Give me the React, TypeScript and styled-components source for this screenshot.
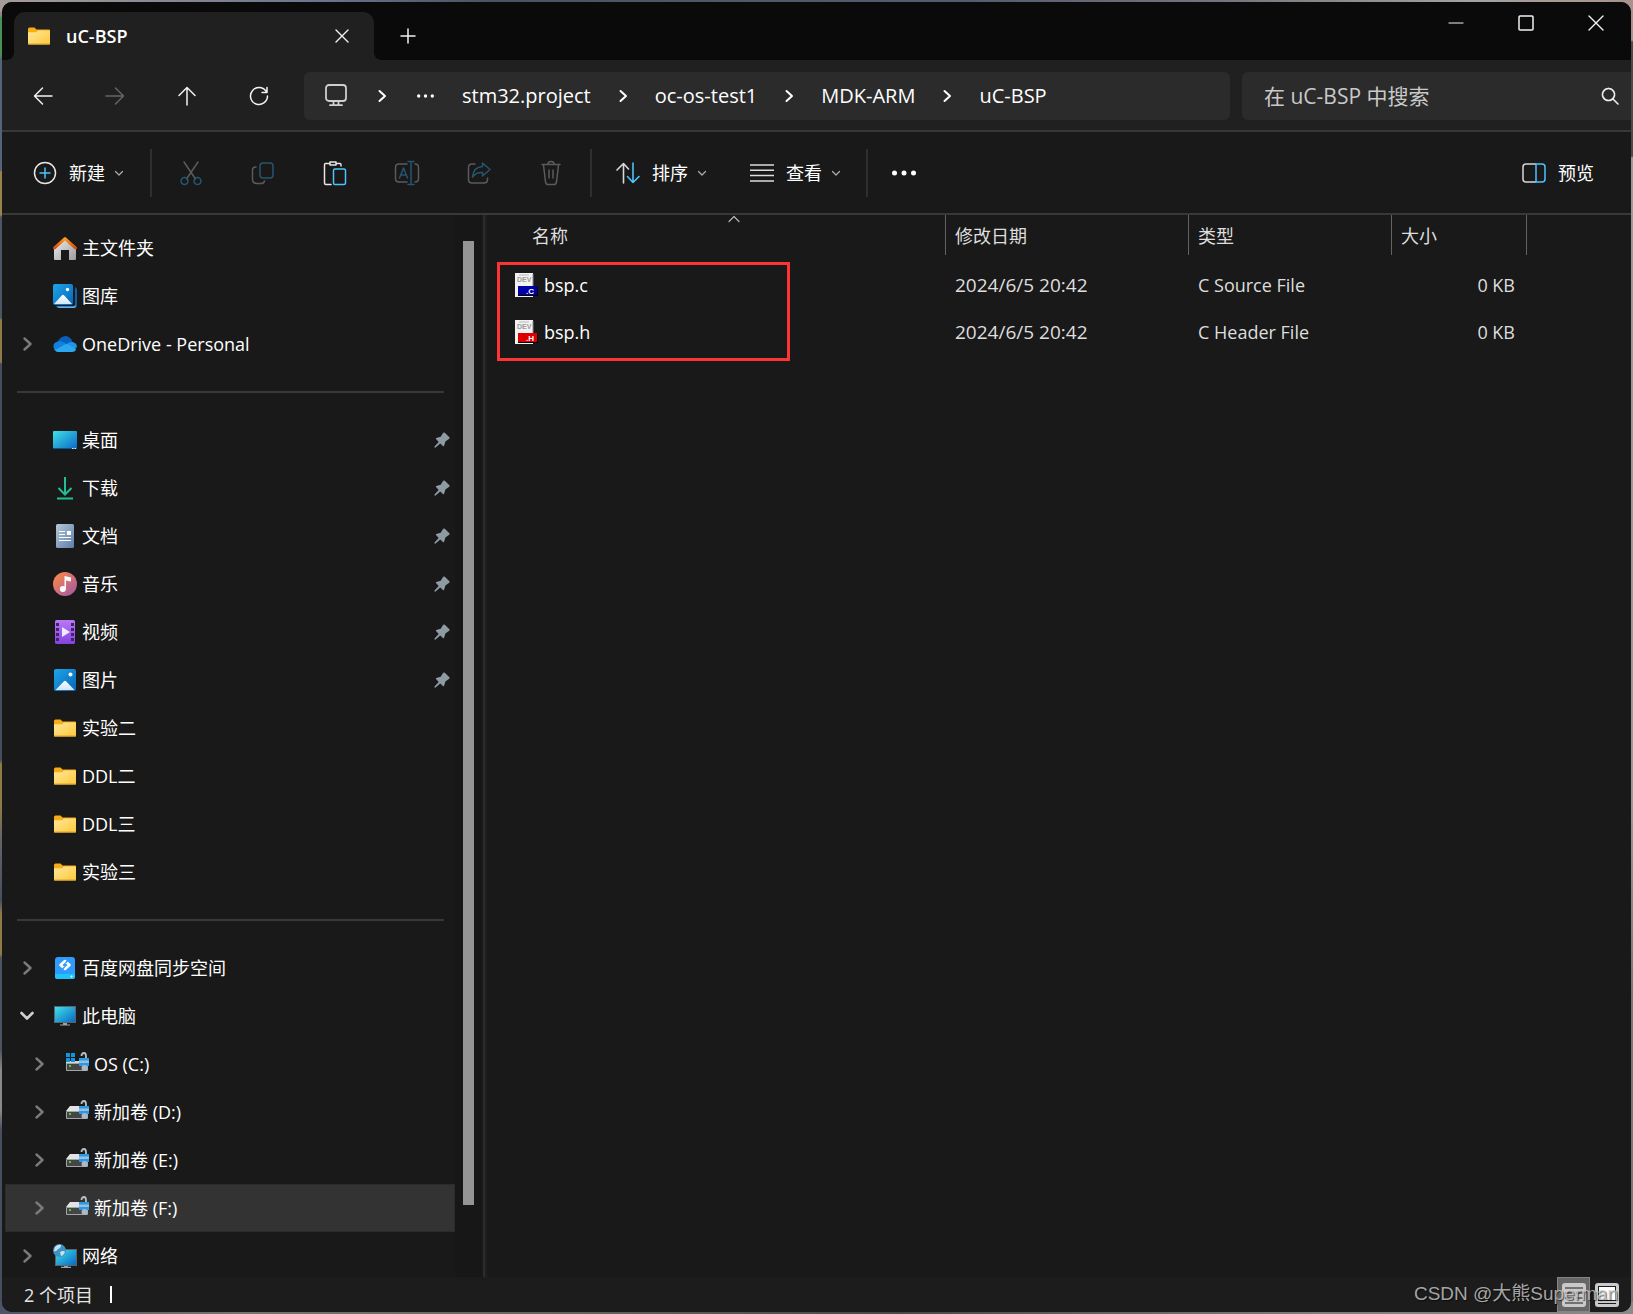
import React from "react";
import styled, { createGlobalStyle, css } from "styled-components";

const ui = `"Open Sans", "Noto Sans CJK SC", sans-serif`;

const GlobalStyle = createGlobalStyle`
  * { box-sizing: border-box; }
  html, body { margin: 0; height: 100%; }
  #root { height: 100%; }
  body {
    overflow: hidden;
    font-family: ${ui};
    font-size: 18px;
    line-height: 24px;
    color: #fff;
  }
  button { font: inherit; color: inherit; background: none; border: 0; padding: 0; }
  svg { display: block; flex: none; }
`;

const Desktop = styled.div`
  height: 100vh;
  min-height: 600px;
  padding: 2px;
  background:
    linear-gradient(90deg, #a59c99, #6a748c 20%, #4d5263 30%, #565d70 60%, #77747d 75%, #a3a3a0 90%, #a8928d) top / 100% 12px no-repeat,
    linear-gradient(90deg, #4d5468, #77746f 15%, #66625e 35%, #484848 55%, #7b7b7b 80%, #8a8a8a) bottom / 100% 12px no-repeat,
    linear-gradient(180deg, #8f8786 0 16px, #4b9155 17px 54px, #56617a 60px 170px, #9a824b 172px 215px, #4e5566 217px 318px, #8d7a48 320px 362px, #464c5c 364px 760px, #8c7a49 764px 806px, #61646a 840px, #494e5e 900px, #8d7a48 914px 954px, #4e5361 958px 1050px, #8c8a86 1070px 1110px, #484e60 1130px) left / 50% 100% no-repeat,
    linear-gradient(180deg, #a8928d 0 40px, #4b4b4b 42px 156px, #9a9a9a 158px 800px, #777 1000px) right / 50% 100% no-repeat;
`;

const Window = styled.div`
  position: relative;
  height: 100%;
  display: flex;
  flex-direction: column;
  border-radius: 10px;
  overflow: hidden;
  background: #191919;
`;

const TabStrip = styled.header`
  flex: none;
  height: 58px;
  display: flex;
  padding-left: 12px;
  background: #0a0a0a;
`;

const Tab = styled.div`
  position: relative;
  align-self: flex-end;
  width: 360px;
  height: 48px;
  display: flex;
  align-items: center;
  gap: 15px;
  padding: 0 16px 0 13px;
  border-radius: 11px 11px 0 0;
  background: #202020;
  font-weight: 600;
  &::before, &::after {
    content: "";
    position: absolute;
    bottom: 0;
    width: 6px;
    height: 6px;
  }
  &::before { left: -6px; background: radial-gradient(circle at 0 0, #0a0a0a 5px, #202020 6px); }
  &::after { right: -6px; background: radial-gradient(circle at 100% 0, #0a0a0a 5px, #202020 6px); }
`;

const TabTitle = styled.span`flex: 1;`;

const IconButton = styled.button<{ $w: number; $h: number }>`
  width: ${(p) => p.$w}px;
  height: ${(p) => p.$h}px;
  display: flex;
  flex: none;
  align-items: center;
  justify-content: center;
  color: #f2f2f2;
  &:disabled { color: #666; }
`;

const NewTab = styled(IconButton)`
  align-self: flex-end;
  margin-left: 10px;
`;

const Caption = styled.div`
  display: flex;
  margin-left: auto;
`;

const NavBar = styled.div`
  flex: none;
  height: 72px;
  display: flex;
  align-items: center;
  padding: 2px 0 0 5px;
  border-bottom: 2px solid #383838;
  background: #202020;
`;

const AddressBar = styled.nav`
  flex: 1;
  min-width: 0;
  height: 48px;
  margin: 0 12px 0 9px;
  padding-left: 20px;
  display: flex;
  align-items: center;
  border-radius: 6px;
  overflow: hidden;
  background: #2b2b2b;
  font-size: 20px;
`;

const Crumb = styled.a`
  color: #fff;
  text-decoration: none;
  white-space: nowrap;
`;

const CrumbArrow = styled.span<{ $w: number }>`
  width: ${(p) => p.$w}px;
  flex: none;
  display: flex;
  justify-content: center;
`;

const SearchBox = styled.label`
  width: 389px;
  height: 48px;
  display: flex;
  align-items: center;
  gap: 8px;
  padding: 0 12px 0 22px;
  border-radius: 6px 0 0 6px;
  background: #2b2b2b;
`;

const SearchInput = styled.input`
  flex: 1;
  min-width: 0;
  padding: 0;
  border: 0;
  outline: 0;
  background: none;
  color: #fff;
  font: 21px/28px ${ui};
  &::placeholder { color: #c9c9c9; opacity: 1; }
`;

const Toolbar = styled.div`
  flex: none;
  height: 83px;
  display: flex;
  align-items: center;
  padding: 0 37px 0 31px;
  border-bottom: 2px solid #383838;
`;

const ToolButton = styled.button`
  display: flex;
  align-items: center;
  gap: 12px;
  height: 48px;
  white-space: nowrap;
`;

const ToolLabel = styled.span`
  display: flex;
  align-items: center;
  gap: 9px;
`;

const ToolRule = styled.span<{ $before: number; $after: number }>`
  width: 2px;
  height: 48px;
  flex: none;
  margin: 0 ${(p) => p.$after}px 0 ${(p) => p.$before}px;
  background: #2f2f2f;
`;

const ViewButton = styled(ToolButton)`margin-left: 43px;`;
const PreviewButton = styled(ToolButton)`margin-left: auto;`;

const Body = styled.div`
  flex: 1;
  min-height: 0;
  display: flex;
`;

const Sidebar = styled.nav`
  width: 453px;
  flex: none;
  padding: 9px 0 0 3px;
  overflow: hidden;
`;

const Tree = styled.ul`
  list-style: none;
  margin: 0;
  padding: 0;
`;

const Rule = styled.li`
  height: 48px;
  padding: 23px 11px 0 12px;
  &::before {
    content: "";
    display: block;
    height: 2px;
    background: #383838;
  }
`;

const TreeRow = styled.button<{ $level: number; $active?: boolean }>`
  width: 100%;
  height: 48px;
  display: flex;
  align-items: center;
  padding: 0 5px 0 ${(p) => p.$level * 12}px;
  text-align: left;
  ${(p) => p.$active && css`background: #333; box-shadow: inset 0 0 0 1px #2b2b2b;`}
`;

const Arrow = styled.span`
  width: 44px;
  margin-right: 4px;
  flex: none;
  display: flex;
  justify-content: center;
`;

const TreeLabel = styled.span`
  flex: 1;
  margin-left: 5px;
  white-space: nowrap;
`;

const ScrollTrack = styled.div`
  width: 27px;
  flex: none;
  padding: 26px 8px 72px;
  background: #171717;
`;

const ScrollThumb = styled.div`
  height: 100%;
  background: #959595;
`;

const Splitter = styled.div`
  width: 5px;
  flex: none;
  border-left: 1px solid #191919;
  border-right: 2px solid #1f1f1f;
  background: #2b2b2b;
`;

const FilePane = styled.main`
  position: relative;
  flex: 1;
  min-width: 0;
  overflow: hidden;
`;

const FileTable = styled.table`
  width: 100%;
  table-layout: fixed;
  border-collapse: collapse;
  color: #dedede;
  th, td { padding: 0; font-weight: 400; text-align: left; }
`;

const Head = styled.th<{ $w?: number }>`
  height: 46px;
  vertical-align: top;
  ${(p) => p.$w && css`width: ${p.$w}px;`}
`;

const HeadLabel = styled.span<{ $pad: number }>`
  position: relative;
  height: 40px;
  display: flex;
  align-items: center;
  padding-top: 1px;
  padding-left: ${(p) => p.$pad}px;
  border-right: 1px solid #636363;
`;

const SortMark = styled.span`
  position: absolute;
  top: 0;
  left: 241px;
`;

const Cell = styled.td<{ $right?: boolean; $size?: number }>`
  height: 47px;
  font-size: ${(p) => p.$size ?? 18}px;
  && {
    padding: 0 ${(p) => (p.$right ? 12 : 0)}px 0 ${(p) => (p.$right ? 0 : 9)}px;
    text-align: ${(p) => (p.$right ? "right" : "left")};
  }
`;

const FileName = styled.span`
  display: flex;
  align-items: center;
  gap: 6px;
  padding-left: 18px;
  color: #fff;
`;

const Highlight = styled.div`
  position: absolute;
  left: 10px;
  top: 47px;
  width: 293px;
  height: 99px;
  border: 3px solid #fd3434;
  pointer-events: none;
`;

const StatusBar = styled.footer`
  flex: none;
  height: 35px;
  display: flex;
  align-items: center;
  padding: 0 12px 0 22px;
  background: #1c1c1c;
  color: #e4e4e4;
`;

const StatusRule = styled.span`
  width: 2px;
  height: 17px;
  margin-left: 17px;
  background: #fff;
`;

const ViewModes = styled.div`
  margin-left: auto;
  display: flex;
  gap: 5px;
`;

const ModeButton = styled.button<{ $on?: boolean; $w: number }>`
  width: ${(p) => p.$w}px;
  height: 35px;
  display: flex;
  align-items: center;
  justify-content: center;
  ${(p) => p.$on && css`background: #666; border: 1px solid #858585;`}
`;

const Watermark = styled.span`
  position: absolute;
  right: 13px;
  bottom: 6px;
  font: 19px/24px "Liberation Sans", "Noto Sans CJK SC", sans-serif;
  color: rgba(205, 205, 205, 0.8);
  text-shadow: 1px 1px 1px rgba(0, 0, 0, 0.6);
  pointer-events: none;
`;

type P = { d: string; size?: number; w?: number; color?: string };
const Line = ({ d, size = 24, w = 1.5, color = "currentColor" }: P) => (
  <svg width={size} height={size} viewBox={`0 0 ${size} ${size}`} fill="none" stroke={color} strokeWidth={w} strokeLinecap="round" strokeLinejoin="round">
    <path d={d} />
  </svg>
);

const Cross = ({ size }: { size: number }) => <Line size={size} w={1.4} d={`M1 1 L${size - 1} ${size - 1} M${size - 1} 1 L1 ${size - 1}`} />;
const Right = () => <Line size={14} w={2} d="M4.5 2 L10 7 L4.5 12" />;
const Down = () => <Line size={10} w={1.3} color="#aaa" d="M1.5 3.5 L5 7 L8.5 3.5" />;
const BLUE = "#4cc2ff";
const DIM = "#5b5b5b";
const DIMBLUE = "#26566f";

const Dots = ({ size, r }: { size: number; r: number }) => (
  <svg width={size} height="8" viewBox={`0 0 ${size} 8`} fill="#fff">
    <circle cx={r + 1} cy="4" r={r} /><circle cx={size / 2} cy="4" r={r} /><circle cx={size - r - 1} cy="4" r={r} />
  </svg>
);

const Duo = ({ a, b, ca = DIM, cb = DIMBLUE }: { a: string; b: string; ca?: string; cb?: string }) => (
  <svg width="26" height="26" viewBox="0 0 26 26" fill="none" strokeWidth="1.5" strokeLinecap="round" strokeLinejoin="round">
    <path d={a} stroke={ca} /><path d={b} stroke={cb} />
  </svg>
);

const Pin = () => (
  <svg width="16" height="16" viewBox="0 0 16 16" fill="#8f9ba3">
    <path d="M9.2 .8 Q10 .2 10.8 .8 L15.4 5.2 Q16 6 15.2 6.8 L11.4 9.4 L10 14 Q9.6 14.6 9 14.1 L6.2 11.4 L1.6 15.6 Q.2 16 .5 14.5 L4.7 9.9 L2 7.1 Q1.5 6.4 2.2 6.1 L6.7 4.8 Z" />
  </svg>
);

const FolderIcon = () => (
  <svg width="24" height="24" viewBox="0 0 24 24">
    <defs><linearGradient id="fold" x1="0" y1="0" x2="1" y2="1"><stop offset="0" stopColor="#ffe79b" /><stop offset="1" stopColor="#ffc938" /></linearGradient></defs>
    <path d="M1 5 Q1 3.500 2.500 3.500 H7.500 L9.500 5.500 H22 Q23 5.500 23 6.500 V20 H1 Z" fill="#f8ad14" />
    <path d="M1 8.200 H9 L11 6.500 H23 V19.500 Q23 20.500 22 20.500 H2 Q1 20.500 1 19.500 Z" fill="url(#fold)" />
    <path d="M1 20 H23" stroke="#dba32b" />
  </svg>
);

const Landscape = ({ stack }: { stack?: boolean }) => (
  <svg width="24" height="24" viewBox="0 0 24 24">
    <defs>
      <linearGradient id="sky" x1="0" y1="0" x2="1" y2="1"><stop offset="0" stopColor="#1fa5e8" /><stop offset="1" stopColor="#0566b9" /></linearGradient>
      <linearGradient id="snow" x1="0" y1="0" x2="0" y2="1"><stop offset="0" stopColor="#fff" /><stop offset="1" stopColor="#cfe6fa" /></linearGradient>
    </defs>
    {stack ? (
      <>
        <path d="M22 3 Q24 4 24 6 V21 Q24 24 21 24 H6 Q3.500 24 3 22 H20 Q22 22 22 20 Z" fill="#0b63b0" />
        <path d="M3.500 22.500 H21 Q22.500 22 23 21 V22.500 L21.500 24 H6 Z" fill="#69aee6" />
        <rect width="20" height="21" rx="2" fill="url(#sky)" />
        <path d="M1 20 L9 11.300 Q10 10.300 11 11.300 L19 20 Z" fill="url(#snow)" /><circle cx="14.500" cy="5.500" r="1.700" fill="#fff" />
      </>
    ) : (
      <>
        <rect x="1" y="1" width="22" height="22" rx="2" fill="url(#sky)" />
        <path d="M2.500 22 L11 13.300 Q12 12.300 13 13.300 L21.500 22 Z" fill="url(#snow)" /><circle cx="17.500" cy="6.500" r="2" fill="#fff" />
      </>
    )}
  </svg>
);

const Screen = () => (
  <defs><linearGradient id="scr" x1="0" y1="0" x2="1" y2="1"><stop offset="0" stopColor="#3fe0e8" /><stop offset="1" stopColor="#0a68c4" /></linearGradient></defs>
);

const Drive = ({ win }: { win?: boolean }) => (
  <svg width="24" height="24" viewBox="0 0 24 24">
    {win ? (
      <>
        <path d="M1 9 H22 V12 H1Z" fill="#d6d6d6" />
        <path d="M1 1 H5 V5 H1Z M6 1 H10 V5 H6Z M1 6 H5 V10 H1Z M6 6 H10 V10 H6Z" fill="#1295e0" />
      </>
    ) : <path d="M5 6 H18 L22 11 H1 Z" fill="#e3e3e3" />}
    <rect x="1" y="11" width="22" height="8" rx="1" fill="#a5a5a5" />
    <rect x="2" y="12" width="20" height="6" fill="#454545" />
    <rect x="4" y="13" width="2" height="2" fill="#2be02b" />
    <path d="M16.500 4 Q16.500 1 19 1 Q21 1 21 4.500 V8" fill="none" stroke="#b5c0c8" strokeWidth="1.800" />
    <rect x="14" y="6" width="10" height="8" fill="#2e97e0" />
    <path d="M14 8.500 H24 V11 H14Z" fill="#8fc1e6" />
    <circle cx="19.500" cy="16" r="3" fill="#aab9c4" />
  </svg>
);

const icons: Record<string, React.ReactNode> = {
  home: (
    <svg width="24" height="24" viewBox="0 0 24 24">
      <defs>
        <linearGradient id="wall" x1="0" y1="0" x2="1" y2="1"><stop offset="0" stopColor="#f0f0f0" /><stop offset="1" stopColor="#9b9b9b" /></linearGradient>
        <linearGradient id="roof" x1="0" y1="0" x2="0" y2="1"><stop offset="0" stopColor="#ff9a1c" /><stop offset="1" stopColor="#d74c0b" /></linearGradient>
      </defs>
      <path d="M1 11 L12 2 L23 11 V23 Q23 24 22 24 H16 V14 H8 V24 H2 Q1 24 1 23 Z" fill="url(#wall)" />
      <path d="M1.500 12 L12 2.500 L22.500 12" fill="none" stroke="url(#roof)" strokeWidth="3" strokeLinecap="round" strokeLinejoin="round" />
    </svg>
  ),
  gallery: <Landscape stack />,
  cloud: (
    <svg width="24" height="24" viewBox="0 0 24 24">
      <path d="M4 11 Q7 4 13 4 Q18 5 19.500 10 L12 14 Z" fill="#0a5fbd" />
      <path d="M1 17 Q-1 11 4.500 9.500 Q8 8.500 11 10.500 L20 15 L6 20 Q2 20 1 17Z" fill="#1280dc" />
      <path d="M14 12 Q16 9.500 19.500 10 Q24 11 24 15 L21 18Z" fill="#1f93e4" />
      <path d="M2 18 L12 12.500 Q14 11.500 16 12.800 L23.200 17.500 Q22 20 19 20 H5.500 Q3 20 2 18Z" fill="#2ba8ee" />
    </svg>
  ),
  desktop: (
    <svg width="24" height="24" viewBox="0 0 24 24"><Screen /><rect y="3" width="24" height="18" rx="1" fill="url(#scr)" /><path d="M0 20.500 H19" stroke="#0a568f" /><path d="M19 20.500 H20.500 M21.500 20.500 H23" stroke="#cdeafe" /></svg>
  ),
  download: (
    <svg width="24" height="24" viewBox="0 0 24 24" fill="none" stroke="#24bd96" strokeWidth="2"><path d="M12 1 V18 M5.500 12 L12 18.500 L18.500 12" /><path d="M4 22.500 H20" /></svg>
  ),
  doc: (
    <svg width="24" height="24" viewBox="0 0 24 24">
      <defs><linearGradient id="page" x1="0" y1="0" x2="1" y2="1"><stop offset="0" stopColor="#b5c7da" /><stop offset="1" stopColor="#5d7fa8" /></linearGradient></defs>
      <rect x="3" width="18" height="24" rx="1.500" fill="url(#page)" /><path d="M6 7.500 H12 M6 10.500 H12 M6 13.500 H18 M6 16.500 H18" stroke="#fff" strokeWidth="1.200" /><rect x="14" y="7" width="4" height="4" fill="#fff" />
    </svg>
  ),
  music: (
    <svg width="24" height="24" viewBox="0 0 24 24">
      <defs><linearGradient id="mus" x1="0" y1="0" x2="1" y2="1"><stop offset="0.200" stopColor="#ef8156" /><stop offset="1" stopColor="#9d55ab" /></linearGradient></defs>
      <circle cx="12" cy="12" r="12" fill="url(#mus)" /><circle cx="9.800" cy="17" r="3" fill="#fff" /><path d="M11.500 17 V4 L18 5.500 V9.500 L13 8.500 V17Z" fill="#fff" />
    </svg>
  ),
  video: (
    <svg width="24" height="24" viewBox="0 0 24 24">
      <defs><linearGradient id="vid" x1="0" y1="0" x2="0" y2="1"><stop offset="0" stopColor="#b978f5" /><stop offset="1" stopColor="#8343dc" /></linearGradient></defs>
      <rect x="2" width="20" height="24" rx="1.500" fill="url(#vid)" />
      <path d="M4.500 3 V21 M19.500 3 V21" stroke="#412270" strokeWidth="3" strokeDasharray="3 2" /><path d="M9 7 L17 12 L9 17Z" fill="#f0e8fb" />
    </svg>
  ),
  picture: <Landscape />,
  folder: <FolderIcon />,
  baidu: (
    <svg width="24" height="24" viewBox="0 0 24 24">
      <rect x="2" y="1" width="20" height="22" rx="3" fill="#2f9bff" /><path d="M2 18 H22 V21 Q22 23 20 23 H4 Q2 23 2 21Z" fill="#1fc4fb" />
      <path d="M12 5 L16.500 9 L12 13 L7.500 9 Z" stroke="#fff" strokeWidth="2.600" fill="none" strokeLinejoin="round" />
      <path d="M15.500 3.500 L12.500 7 M8.500 14.500 L11.500 11" stroke="#2f9bff" strokeWidth="1.400" /><circle cx="18.500" cy="20.500" r="1" fill="#fff" />
    </svg>
  ),
  pc: (
    <svg width="24" height="24" viewBox="0 0 24 24"><Screen /><rect x="1" y="2" width="22" height="17" fill="#56656f" /><rect x="2" y="3" width="20" height="15" fill="url(#scr)" /><path d="M10 19 H14 V20.500 H17 V21.500 H7 V20.500 H10Z" fill="#98a4ad" /></svg>
  ),
  osDrive: <Drive win />,
  drive: <Drive />,
  network: (
    <svg width="24" height="24" viewBox="0 0 24 24">
      <Screen /><rect x="2" y="5" width="22" height="17" fill="#56656f" /><rect x="3" y="6" width="20" height="15" fill="url(#scr)" /><path d="M11 22 H15 V22.800 H18 V24 H8 V22.800 H11Z" fill="#98a4ad" />
      <circle cx="6.500" cy="6.500" r="6.500" fill="#3f93c4" /><path d="M2 3 Q5 0 8 1 Q8 4 5 5 Q3 8 1 7Z M7 8 Q11 6 12 8 Q10 12 8 12Z" fill="#c6e2f2" />
    </svg>
  ),
};

const FileIcon = ({ ext, color }: { ext: string; color: string }) => (
  <svg width="24" height="26" viewBox="0 0 24 26">
    <path d="M1 1 H19 V25 H1Z" fill="#f2f2f2" /><path d="M19 2 V14" stroke="#8a8a8a" />
    <text x="3" y="10" fontFamily="Liberation Sans" fontSize="7" fontWeight="700" fill="#9a9a9a">DEV</text>
    <path d="M5 3 H15" stroke="#bbb" />
    <rect x="4" y="15" width="20" height="9" fill="#000" /><rect x="4" y="14" width="19" height="9" fill={color} />
    <text x="12" y="21.500" fontFamily="Liberation Sans" fontSize="8" fontWeight="700" fill="#fff">{ext}</text>
  </svg>
);

type Item = { icon: string; label: string; level?: number; arrow?: "right" | "down"; pin?: boolean; active?: boolean };
const groups: Item[][] = [
  [
    { icon: "home", label: "主文件夹" },
    { icon: "gallery", label: "图库" },
    { icon: "cloud", label: "OneDrive - Personal", arrow: "right" },
  ],
  [
    { icon: "desktop", label: "桌面", pin: true },
    { icon: "download", label: "下载", pin: true },
    { icon: "doc", label: "文档", pin: true },
    { icon: "music", label: "音乐", pin: true },
    { icon: "video", label: "视频", pin: true },
    { icon: "picture", label: "图片", pin: true },
    { icon: "folder", label: "实验二" },
    { icon: "folder", label: "DDL二" },
    { icon: "folder", label: "DDL三" },
    { icon: "folder", label: "实验三" },
  ],
  [
    { icon: "baidu", label: "百度网盘同步空间", arrow: "right" },
    { icon: "pc", label: "此电脑", arrow: "down" },
    { icon: "osDrive", label: "OS (C:)", arrow: "right", level: 1 },
    { icon: "drive", label: "新加卷 (D:)", arrow: "right", level: 1 },
    { icon: "drive", label: "新加卷 (E:)", arrow: "right", level: 1 },
    { icon: "drive", label: "新加卷 (F:)", arrow: "right", level: 1, active: true },
    { icon: "network", label: "网络", arrow: "right" },
  ],
];

const files = [
  { name: "bsp.c", ext: ".C", color: "#0000a8", date: "2024/6/5 20:42", type: "C Source File", size: "0 KB" },
  { name: "bsp.h", ext: ".H", color: "#dd0000", date: "2024/6/5 20:42", type: "C Header File", size: "0 KB" },
];

const path = ["stm32.project", "oc-os-test1", "MDK-ARM", "uC-BSP"];

const edits = [
  { name: "剪切", off: true, icon: <Duo a="M6 2 L17.500 19 M20 2 L8.500 19" b="M6.500 17.500 A3.500 3.500 0 1 0 6.510 17.500 M19.500 17.500 A3.500 3.500 0 1 0 19.510 17.500" /> },
  { name: "复制", off: true, icon: <Duo a="M6 7 Q2.500 7 2.500 10 V19 Q2.500 23.500 7 23.500 H11 Q14 23.500 14.500 21" b="M13 3 H20 Q23 3 23 6 V15 Q23 18 20 18 H13 Q10 18 10 15 V6 Q10 3 13 3Z" /> },
  { name: "粘贴", off: false, icon: <Duo ca="#e6e6e6" cb={BLUE} a="M8 3.500 H3.500 Q2.500 3.500 2.500 5 V23 Q2.500 24.500 4 24.500 H9 M14 3.500 H18 Q19 3.500 19 5 V6 M8 2 H14 V5 H8Z" b="M13 9 H22 Q23.500 9 23.500 10.500 V23 Q23.500 24.500 22 24.500 H13 Q11.500 24.500 11.500 23 V10.500 Q11.500 9 13 9Z" /> },
  { name: "重命名", off: true, icon: <Duo a="M13 4 H5 Q1.500 4 1.500 7.500 V18.500 Q1.500 22 5 22 H13 M21 4 Q24.500 4 24.500 7.500 V18.500 Q24.500 22 21 22" b="M17 1.500 V24.500 M14 1.500 H20 M14 24.500 H20 M5.500 18 L9.500 8 L13.500 18 M7 15 H12" /> },
  { name: "共享", off: true, icon: <Duo a="M9 4 H6 Q2.500 4 2.500 7.500 V19.500 Q2.500 23 6 23 H18 Q21.500 23 21.500 19.500 V18" b="M16.500 3 L24 9.500 L16.500 16 V12.500 Q10 12 6.500 17 Q7.500 7 16.500 6.500Z" /> },
  { name: "删除", off: true, icon: <Duo a="M4 4.500 H22 M10 4 Q10 1.500 13 1.500 Q16 1.500 16 4 M5.500 5 L7.500 22 Q8 24.500 10 24.500 H16 Q18 24.500 18.500 22 L20.500 5 M11 10 V18 M15 10 V18" b="" /> },
];

export default function App() {
  return (
    <>
      <GlobalStyle />
      <Desktop>
        <Window>
          <TabStrip>
            <Tab>
              <FolderIcon />
              <TabTitle>uC-BSP</TabTitle>
              <IconButton $w={32} $h={32} aria-label="关闭标签页"><Cross size={14} /></IconButton>
            </Tab>
            <NewTab $w={48} $h={48} aria-label="新标签页"><Line size={16} w={1.5} d="M8 1 V15 M1 8 H15" /></NewTab>
            <Caption>
              <IconButton $w={70} $h={42} aria-label="最小化"><Line size={16} w={1.2} d="M1 8 H15" /></IconButton>
              <IconButton $w={70} $h={42} aria-label="最大化"><Line size={16} d="M2 1 H14 Q15 1 15 2 V14 Q15 15 14 15 H2 Q1 15 1 14 V2 Q1 1 2 1Z" /></IconButton>
              <IconButton $w={70} $h={42} aria-label="关闭"><Cross size={16} /></IconButton>
            </Caption>
          </TabStrip>

          <NavBar>
            <IconButton $w={72} $h={48} aria-label="后退"><Line size={20} d="M19 10 H1.500 M9.500 2 L1.500 10 L9.500 18" /></IconButton>
            <IconButton $w={72} $h={48} aria-label="前进" disabled><Line size={20} d="M1 10 H18.500 M10.500 2 L18.500 10 L10.500 18" /></IconButton>
            <IconButton $w={72} $h={48} aria-label="向上"><Line size={20} d="M10 19 V1.500 M2 9.500 L10 1.500 L18 9.500" /></IconButton>
            <IconButton $w={72} $h={48} aria-label="刷新"><Line size={20} d="M17.500 6 A8.500 8.500 0 1 0 18.500 10 M18 1.500 V6.500 H13" /></IconButton>
            <AddressBar aria-label="路径">
              <svg width="24" height="24" viewBox="0 0 24 24" fill="none" stroke="#cfcfcf" strokeWidth="1.800" strokeLinecap="round">
                <rect x="2" y="1" width="20" height="16" rx="3" /><path d="M9.500 17.500 V20 M14.500 17.500 V20 M6 21.200 H18" />
              </svg>
              <CrumbArrow $w={68}><Right /></CrumbArrow>
              <Dots size={19} r={1.7} />
              <CrumbArrow $w={27} />
              {path.map((p, i) => (
                <React.Fragment key={p}>
                  {i > 0 && <CrumbArrow $w={64}><Right /></CrumbArrow>}
                  <Crumb href="#">{p}</Crumb>
                </React.Fragment>
              ))}
            </AddressBar>
            <SearchBox>
              <SearchInput type="text" aria-label="搜索" placeholder="在 uC-BSP 中搜索" />
              <Line size={18} w={1.6} color="#eee" d="M7.500 1.500 A6 6 0 1 0 7.510 1.500 M12 12 L17 17" />
            </SearchBox>
          </NavBar>

          <Toolbar>
            <ToolButton>
              <svg width="24" height="24" viewBox="0 0 24 24" fill="none" strokeWidth="1.500" strokeLinecap="round"><circle cx="12" cy="12" r="10.500" stroke="#e6e6e6" /><path d="M12 7 V17 M7 12 H17" stroke={BLUE} /></svg>
              <ToolLabel>新建<Down /></ToolLabel>
            </ToolButton>
            <ToolRule $before={26} $after={3} />
            {edits.map((e) => (
              <IconButton key={e.name} $w={72} $h={48} aria-label={e.name} disabled={e.off}>{e.icon}</IconButton>
            ))}
            <ToolRule $before={3} $after={24} />
            <ToolButton>
              <svg width="24" height="24" viewBox="0 0 24 24" fill="none" strokeWidth="1.600" strokeLinecap="round" strokeLinejoin="round"><path d="M7.500 22 V2.500 M1 9 L7.500 2.500 L12.500 8" stroke="#d8d8d8" /><path d="M17 2 V21.500 M11.500 15.500 L17 21.500 L23 15.500" stroke={BLUE} /></svg>
              <ToolLabel>排序<Down /></ToolLabel>
            </ToolButton>
            <ViewButton>
              <svg width="24" height="24" viewBox="0 0 24 24" stroke="#dcdcdc" strokeWidth="1.500"><path d="M0 4 H24 M0 9.300 H24 M0 14.600 H24 M0 20 H24" /></svg>
              <ToolLabel>查看<Down /></ToolLabel>
            </ViewButton>
            <ToolRule $before={25} $after={23} />
            <IconButton $w={26} $h={48} aria-label="更多"><Dots size={26} r={2.5} /></IconButton>
            <PreviewButton>
              <svg width="24" height="24" viewBox="0 0 24 24" fill="none" strokeWidth="1.500"><path d="M14 3 H4 Q1 3 1 6 V18 Q1 21 4 21 H14" stroke="#d8d8d8" /><path d="M14 3 H20 Q23 3 23 6 V18 Q23 21 20 21 H14Z" stroke={BLUE} /></svg>
              预览
            </PreviewButton>
          </Toolbar>

          <Body>
            <Sidebar aria-label="导航窗格">
              <Tree>
                {groups.map((g, gi) => (
                  <React.Fragment key={gi}>
                    {gi > 0 && <Rule aria-hidden="true" />}
                    {g.map((it) => (
                      <li key={it.label}>
                        <TreeRow $level={it.level ?? 0} $active={it.active}>
                          <Arrow>
                            {it.arrow === "right" && <Line size={14} w={2.4} color="#7a7a7a" d="M4.500 1.500 L10.500 7 L4.500 12.500" />}
                            {it.arrow === "down" && <Line size={14} w={2.6} color="#cfcfcf" d="M1.500 4 L7 9.500 L12.500 4" />}
                          </Arrow>
                          {icons[it.icon]}
                          <TreeLabel>{it.label}</TreeLabel>
                          {it.pin && <Pin />}
                        </TreeRow>
                      </li>
                    ))}
                  </React.Fragment>
                ))}
              </Tree>
            </Sidebar>
            <ScrollTrack><ScrollThumb /></ScrollTrack>
            <Splitter />
            <FilePane>
              <FileTable>
                <thead>
                  <tr>
                    <Head $w={459}><HeadLabel $pad={45}>名称<SortMark><Line size={12} w={1.2} color="#b5b5b5" d="M1 6.500 L6 1.500 L11 6.500" /></SortMark></HeadLabel></Head>
                    <Head $w={243}><HeadLabel $pad={9}>修改日期</HeadLabel></Head>
                    <Head $w={203}><HeadLabel $pad={9}>类型</HeadLabel></Head>
                    <Head $w={135}><HeadLabel $pad={9}>大小</HeadLabel></Head>
                    <Head />
                  </tr>
                </thead>
                <tbody>
                  {files.map((f) => (
                    <tr key={f.name}>
                      <Cell><FileName><FileIcon ext={f.ext} color={f.color} />{f.name}</FileName></Cell>
                      <Cell $size={19}>{f.date}</Cell>
                      <Cell>{f.type}</Cell>
                      <Cell $right>{f.size}</Cell>
                      <Cell />
                    </tr>
                  ))}
                </tbody>
              </FileTable>
              <Highlight />
            </FilePane>
          </Body>

          <StatusBar>
            2 个项目
            <StatusRule />
            <ViewModes>
              <ModeButton $w={33} $on aria-label="详细信息">
                <svg width="24" height="24" viewBox="0 0 24 24"><rect width="24" height="24" rx="3" fill="#c9c9c9" /><path d="M3 5 H21 M3 10 H12 M14 10 H21 M3 15 H12 M14 15 H21 M3 20 H21" stroke="#1c1c1c" /></svg>
              </ModeButton>
              <ModeButton $w={24} aria-label="大图标">
                <svg width="24" height="24" viewBox="0 0 24 24"><rect width="24" height="24" rx="3" fill="#c9c9c9" /><rect x="3.500" y="3.500" width="17" height="14" fill="#fff" stroke="#1c1c1c" /><path d="M3 20.500 H21" stroke="#1c1c1c" /></svg>
              </ModeButton>
            </ViewModes>
          </StatusBar>
          <Watermark>CSDN @大熊Superman</Watermark>
        </Window>
      </Desktop>
    </>
  );
}
